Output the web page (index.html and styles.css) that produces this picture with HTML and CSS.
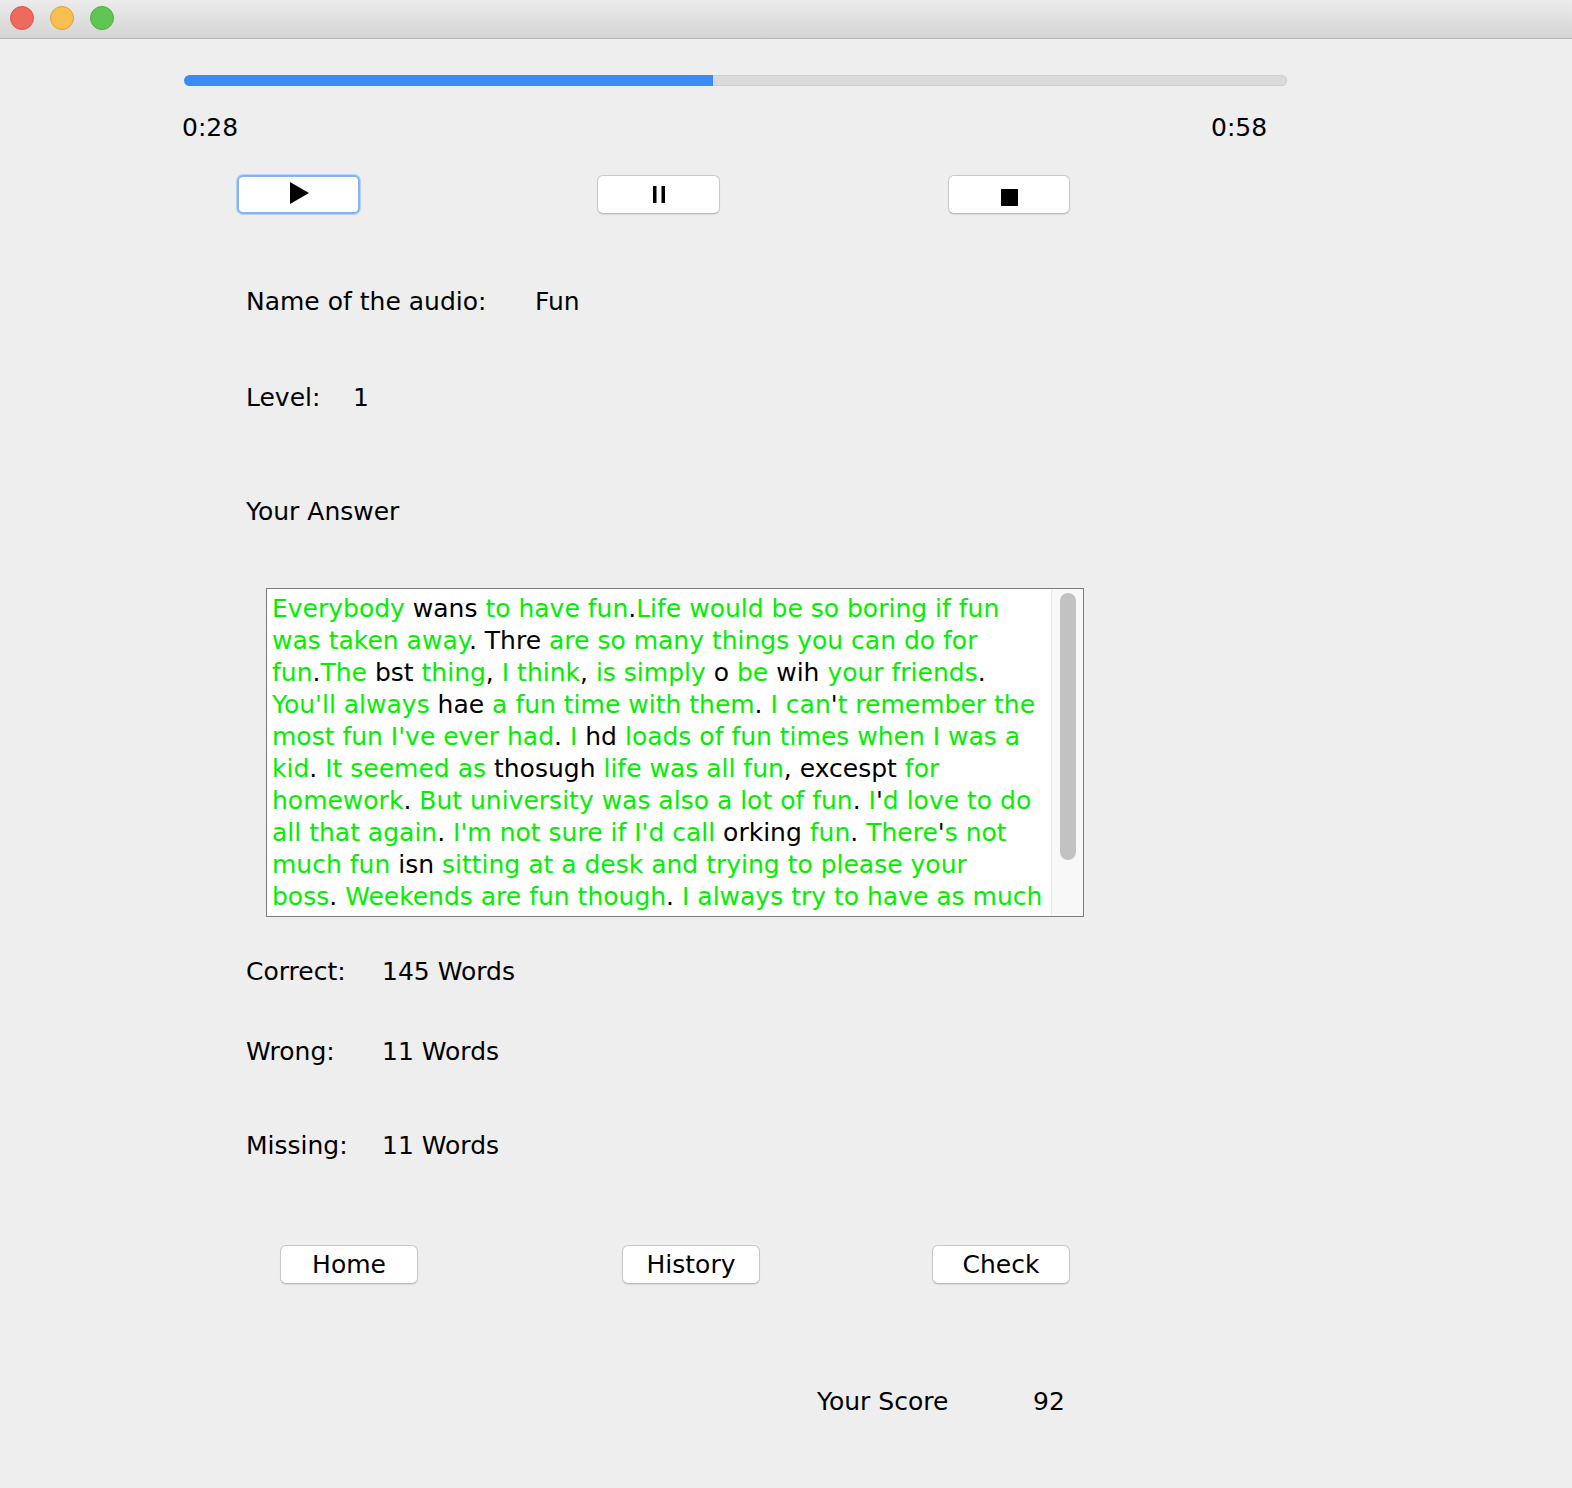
FILE: index.html
```html
<!DOCTYPE html>
<html>
<head>
<meta charset="utf-8">
<title>Listening</title>
<link rel="stylesheet" href="styles.css">
</head>
<body>
<div class="titlebar">
  <span class="light red"></span>
  <span class="light yellow"></span>
  <span class="light green"></span>
</div>
<main class="panel">
  <div class="progress"><div class="fill" style="width:529px"></div></div>
  <div class="times"><span class="t-cur">0:28</span><span class="t-end">0:58</span></div>
  <div class="controls">
    <button class="btn ctl play focus"><svg width="19" height="22" viewBox="0 0 19 22"><polygon points="0,0 19,11 0,22" fill="#000"/></svg></button>
    <button class="btn ctl pause"><svg width="12" height="17" viewBox="0 0 12 17"><rect x="0" y="0" width="3.5" height="17" fill="#000"/><rect x="8.5" y="0" width="3.5" height="17" fill="#000"/></svg></button>
    <button class="btn ctl stop"><svg width="17" height="17" viewBox="0 0 17 17"><rect x="0" y="0" width="17" height="17" fill="#000"/></svg></button>
  </div>
  <div class="row r-name"><span class="lab lab-name">Name of the audio:</span><span>Fun</span></div>
  <div class="row r-level"><span class="lab lab-level">Level:</span><span>1</span></div>
  <div class="row r-answer"><span>Your Answer</span></div>
  <div class="answer">
    <div class="text">
      <div class="ln"><span class="g">Everybody</span> wans <span class="g">to have fun</span>.<span class="g">Life would be so boring if fun</span></div>
      <div class="ln"><span class="g">was taken away</span>. Thre <span class="g">are so many things you can do for</span></div>
      <div class="ln"><span class="g">fun</span>.<span class="g">The</span> bst <span class="g">thing</span>, <span class="g">I think</span>, <span class="g">is simply</span> o <span class="g">be</span> wih <span class="g">your friends</span>.</div>
      <div class="ln"><span class="g">You'll always</span> hae <span class="g">a fun time with them</span>. <span class="g">I can</span>'<span class="g">t remember the</span></div>
      <div class="ln"><span class="g">most fun I've ever had</span>. <span class="g">I</span> hd <span class="g">loads of fun times when I was a</span></div>
      <div class="ln"><span class="g">kid</span>. <span class="g">It seemed as</span> thosugh <span class="g">life was all fun</span>, excespt <span class="g">for</span></div>
      <div class="ln"><span class="g">homework</span>. <span class="g">But university was also a lot of fun</span>. <span class="g">I</span>'<span class="g">d love to do</span></div>
      <div class="ln"><span class="g">all that again</span>. <span class="g">I'm not sure if I'd call</span> orking <span class="g">fun</span>. <span class="g">There</span>'<span class="g">s not</span></div>
      <div class="ln"><span class="g">much fun</span> isn <span class="g">sitting at a desk and trying to please your</span></div>
      <div class="ln"><span class="g">boss</span>. <span class="g">Weekends are fun though</span>. <span class="g">I always try to have as much</span></div>
    </div>
    <div class="scroll"><div class="thumb"></div></div>
  </div>
  <div class="row r-correct"><span class="lab lab-stat">Correct:</span><span>145 Words</span></div>
  <div class="row r-wrong"><span class="lab lab-stat">Wrong:</span><span>11 Words</span></div>
  <div class="row r-missing"><span class="lab lab-stat">Missing:</span><span>11 Words</span></div>
  <div class="actions">
    <button class="btn act home">Home</button>
    <button class="btn act history">History</button>
    <button class="btn act check">Check</button>
  </div>
  <div class="row r-score"><span class="lab lab-score">Your Score</span><span>92</span></div>
</main>
</body>
</html>
```
FILE: styles.css
```css
html, body {
  margin: 0;
  padding: 0;
  background: #eeeeee;
}
body {
  font-family: "DejaVu Sans", "Liberation Sans", sans-serif;
  font-size: 25px;
  color: #000;
  width: 1572px;
  height: 1488px;
  overflow: hidden;
}
.titlebar {
  border-bottom: 1px solid #b3b3b3;
  background: linear-gradient(#ececec, #d4d4d4);
  display: flex;
  align-items: flex-start;
  padding: 6px 0 0 10px;
  box-sizing: content-box;
  height: 32px;
  gap: 16px;
}
.light {
  width: 24px;
  height: 24px;
  border-radius: 50%;
  box-sizing: border-box;
  display: block;
}
.red { background: #ee6a5f; border: 1px solid #d8554b; }
.yellow { background: #f6bf4f; border: 1px solid #dca33b; }
.green { background: #61c554; border: 1px solid #4ead42; }

.panel {
  display: flex;
  flex-direction: column;
  align-items: flex-start;
}
.progress {
  margin: 36px 0 0 184px;
  width: 1103px;
  height: 11px;
  border-radius: 6px;
  background: #dadada;
  box-shadow: inset 0 0 0 1px #cfcfcf;
  overflow: hidden;
}
.fill {
  height: 100%;
  background: #3b8af7;
  border-radius: 6px 0 0 6px;
}
.row {
  height: 32px;
  line-height: 32px;
  white-space: nowrap;
  display: flex;
}
.times {
  margin: 26px 0 0 182px;
  height: 32px;
  line-height: 32px;
  display: flex;
}
.t-cur { width: 1029px; }

.btn {
  font-family: "DejaVu Sans", "Liberation Sans", sans-serif;
  font-size: 25px;
  color: #000;
  background: #fff;
  border: 1px solid #c9c9c9;
  border-bottom-color: #b9b9b9;
  border-radius: 6px;
  box-shadow: 0 1px 1px rgba(0,0,0,0.08);
  height: 39px;
  padding: 0;
  box-sizing: border-box;
  display: flex;
  align-items: center;
  justify-content: center;
}
.controls {
  margin: 31px 0 0 237px;
  display: flex;
}
.ctl { width: 123px; }
.focus {
  border: 2px solid #86b3f1;
  box-shadow: 0 0 0 1px #b8d2f6;
}
.play svg { margin-left: 2px; margin-top: -3px; }
.pause { margin-left: 237px; }
.stop { margin-left: 228px; width: 122px; }
.stop svg { margin-top: 5px; margin-left: 1px; }

.r-name { margin: 72px 0 0 246px; }
.lab-name { width: 289px; }
.r-level { margin: 64px 0 0 246px; }
.lab-level { width: 107px; }
.r-answer { margin: 82px 0 0 246px; }

.answer {
  margin: 60px 0 0 266px;
  width: 818px;
  height: 329px;
  box-sizing: border-box;
  border: 1px solid #7c7c7c;
  background: #fff;
  display: flex;
}
.text {
  flex: 1;
  padding: 4px 0 0 5px;
  overflow: hidden;
  line-height: 32px;
  white-space: nowrap;
}
.g { color: #00f000; }
.scroll {
  width: 32px;
  background: #f8f8f8;
  border-left: 1px solid #e7e7e7;
  box-sizing: border-box;
  padding: 4px 0 0 8px;
}
.thumb {
  width: 16px;
  height: 267px;
  border-radius: 8px;
  background: #c2c2c2;
}

.r-correct { margin: 39px 0 0 246px; }
.r-wrong { margin: 48px 0 0 246px; }
.r-missing { margin: 62px 0 0 246px; }
.lab-stat { width: 136px; }

.actions {
  margin: 83px 0 0 280px;
  display: flex;
}
.act { width: 138px; padding-top: 0; }
.history { margin-left: 204px; }
.check { margin-left: 172px; }

.r-score { margin: 102px 0 0 817px; }
.lab-score { width: 216px; }
```
